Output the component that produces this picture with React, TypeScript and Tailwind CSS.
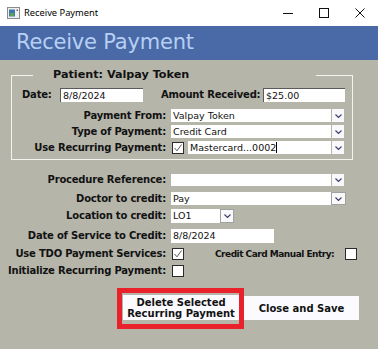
import React from "react";

const LBL = "text-[10px] font-bold tracking-[-0.2px] leading-none whitespace-nowrap text-[#121212]";
const TXT = "text-[9.5px] leading-none whitespace-nowrap text-[#111]";

function Chevron() {
  return (
    <svg width="7" height="4" viewBox="0 0 7 4">
      <path d="M0.5 0.5 L3.5 3.5 L6.5 0.5" fill="none" stroke="#3b3d6b" strokeWidth="1.1" />
    </svg>
  );
}

function DropBtn({ className }: { className: string }) {
  return (
    <div className={`flex items-center justify-center bg-[#f9f9fb] shrink-0 ${className}`}>
      <Chevron />
    </div>
  );
}

function Check({ checked, className = "" }: { checked?: boolean; className?: string }) {
  return (
    <div className={`w-[12px] h-[12px] bg-white border border-[#2b2b2b] flex items-center justify-center shrink-0 ${className}`}>
      {checked && (
        <svg width="10" height="10" viewBox="0 0 10 10">
          <path d="M1.5 5 L4 7.8 L8.5 1.5" fill="none" stroke="#444" strokeWidth="0.9" />
        </svg>
      )}
    </div>
  );
}

function Field({ className, children }: { className: string; children?: React.ReactNode }) {
  return <div className={`bg-white flex items-center pl-[2px] shrink-0 ${TXT} ${className}`}>{children}</div>;
}

export default function App() {
  return (
    <div className="w-[378px] h-[349px] bg-[#b5b5aa] flex flex-col overflow-hidden font-['DejaVu_Sans',sans-serif]">
      {/* title bar */}
      <div className="h-[26px] shrink-0 bg-white flex items-center">
        <svg className="ml-[7px]" width="13" height="12" viewBox="0 0 13 12">
          <rect x="0.5" y="0.5" width="12" height="11" fill="#f0f0f0" stroke="#8a8a8a" />
          <rect x="2" y="2.5" width="6" height="7" fill="#3f78a6" />
          <rect x="3" y="6" width="4" height="3" fill="#58a060" />
          <rect x="9.5" y="2.5" width="1.5" height="1.5" fill="#666" />
        </svg>
        <span className="ml-[4px] font-['Noto_Sans',sans-serif] text-[9.3px] text-black">Receive Payment</span>
        <div className="ml-auto flex h-full">
          <div className="w-[36px] flex items-center justify-center">
            <svg width="10" height="10" viewBox="0 0 10 10">
              <path d="M0 5.5 H10" stroke="#111" strokeWidth="1" />
            </svg>
          </div>
          <div className="w-[36px] flex items-center justify-center">
            <svg width="10" height="10" viewBox="0 0 10 10">
              <rect x="0.5" y="0.5" width="9" height="9" fill="none" stroke="#111" strokeWidth="1" />
            </svg>
          </div>
          <div className="w-[36px] flex items-center justify-center">
            <svg width="10" height="10" viewBox="0 0 10 10">
              <path d="M0.5 0.5 L9.5 9.5 M9.5 0.5 L0.5 9.5" stroke="#111" strokeWidth="1" />
            </svg>
          </div>
        </div>
      </div>

      {/* blue header */}
      <div className="h-[34px] shrink-0 bg-[#4a69a7] pl-[16px] pt-[4px]">
        <div className="text-[21px] leading-[24px] tracking-[-0.2px] text-[#b6d0f4]">Receive Payment</div>
      </div>

      {/* group box */}
      <fieldset className="ml-[11px] mt-[9px] w-[342px] border border-[#f4f4ef] pt-[7px] pb-[5px] shrink-0">
        <legend className="ml-[21px] w-[283px] pl-[20px] leading-[12px] text-[11.2px] font-bold text-[#121212] whitespace-nowrap">
          Patient: Valpay Token
        </legend>
        <div className="flex items-center h-[14px]">
          <div className={`${LBL} pl-[10px] w-[48px]`}>Date:</div>
          <Field className="w-[83px] h-[14px] border-t border-l border-[#5a5a5a]">8/8/2024</Field>
          <div className={`${LBL} ml-[18px] w-[102px]`}>Amount Received:</div>
          <Field className="w-[82px] h-[14px] border-t border-l border-[#5a5a5a]">$25.00</Field>
        </div>
        <div className="mt-[7px] flex items-center h-[13px]">
          <div className={`${LBL} w-[154px] text-right`}>Payment From:</div>
          <Field className="ml-[5px] w-[160px] h-[13px]">Valpay Token</Field>
          <DropBtn className="ml-[1px] w-[12px] h-[13px]" />
        </div>
        <div className="mt-[3px] flex items-center h-[13px]">
          <div className={`${LBL} w-[154px] text-right`}>Type of Payment:</div>
          <Field className="ml-[5px] w-[160px] h-[13px]">Credit Card</Field>
          <DropBtn className="ml-[1px] w-[12px] h-[13px]" />
        </div>
        <div className="mt-[3px] flex items-center h-[13px]">
          <div className={`${LBL} w-[154px] text-right`}>Use Recurring Payment:</div>
          <Check checked className="ml-[6px]" />
          <Field className="ml-[4px] w-[143px] h-[13px]">
            Mastercard...0002<span className="inline-block w-px h-[11px] bg-black" />
          </Field>
          <DropBtn className="ml-[1px] w-[12px] h-[13px]" />
        </div>
      </fieldset>

      {/* lower section */}
      <div className="mt-[14px] flex flex-col">
        <div className="flex items-center h-[12px]">
          <div className={`${LBL} w-[166px] text-right`}>Procedure Reference:</div>
          <Field className="ml-[5px] w-[160px] h-[12px]" />
          <DropBtn className="ml-[1px] w-[12px] h-[12px]" />
        </div>
        <div className="mt-[6px] flex items-center h-[13px]">
          <div className={`${LBL} w-[166px] text-right`}>Doctor to credit:</div>
          <Field className="ml-[5px] w-[160px] h-[13px]">Pay</Field>
          <DropBtn className="w-[15px] h-[13px] border border-[#a0a0a0]" />
        </div>
        <div className="mt-[4px] flex items-center h-[14px]">
          <div className={`${LBL} w-[166px] text-right`}>Location to credit:</div>
          <Field className="ml-[5px] w-[49px] h-[14px]">LO1</Field>
          <DropBtn className="w-[14px] h-[14px] border border-[#a0a0a0]" />
        </div>
        <div className="mt-[6px] flex items-center h-[14px]">
          <div className={`${LBL} w-[166px] text-right`}>Date of Service to Credit:</div>
          <Field className="ml-[5px] w-[103px] h-[14px]">8/8/2024</Field>
        </div>
        <div className="mt-[5px] flex items-center h-[12px]">
          <div className={`${LBL} w-[166px] text-right`}>Use TDO Payment Services:</div>
          <Check checked className="ml-[6px]" />
          <div className="ml-[31px] w-[118px] text-[9px] font-bold tracking-[-0.5px] leading-none whitespace-nowrap text-[#121212]">
            Credit Card Manual Entry:
          </div>
          <Check className="ml-[12px]" />
        </div>
        <div className="mt-[5px] flex items-center h-[12px]">
          <div className={`${LBL} w-[166px] text-right`}>Initialize Recurring Payment:</div>
          <Check className="ml-[6px]" />
        </div>

        <div className="mt-[11px] ml-[117px] flex items-start">
          <div className="border-[5px] border-[#e8212a] pt-[2px] pb-[4px] pl-[1px]">
            <div className="w-[116px] h-[25px] bg-[#fbfbff] flex flex-col items-center justify-center text-[10px] font-bold leading-[11px] text-[#121212]">
              <span>Delete Selected</span>
              <span>Recurring Payment</span>
            </div>
          </div>
          <div className="mt-[8px] w-[115px] h-[24px] bg-[#fbfbff] flex items-center justify-center text-[10px] font-bold text-[#121212]">
            Close and Save
          </div>
        </div>
      </div>
    </div>
  );
}
